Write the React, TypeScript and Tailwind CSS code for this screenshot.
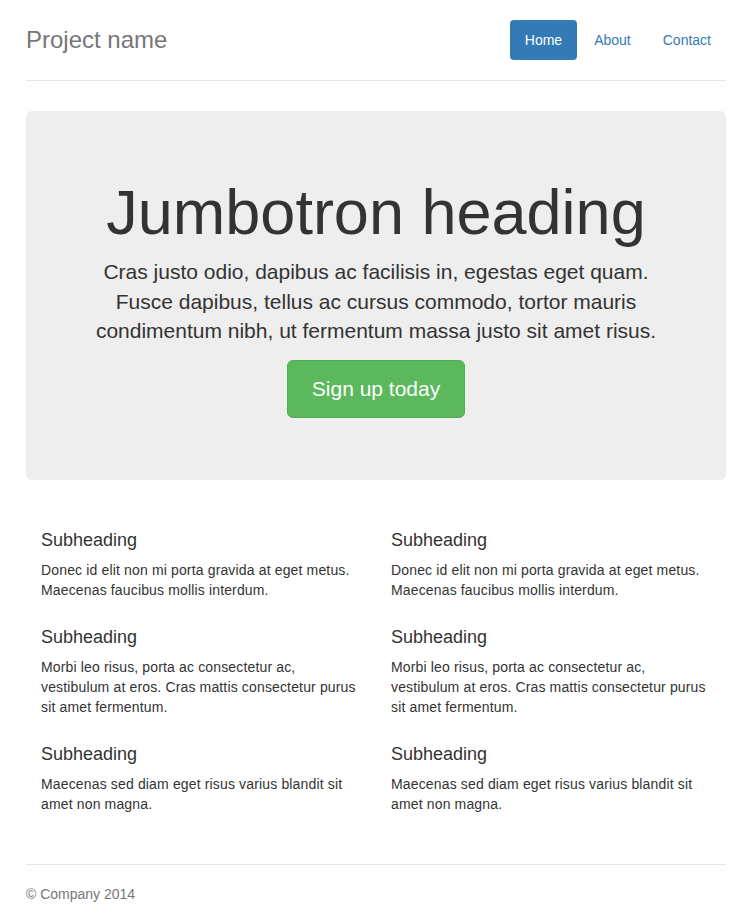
import React from "react";

const navItems = [
  { label: "Home", active: true },
  { label: "About", active: false },
  { label: "Contact", active: false },
];

const columns = [
  [
    "Donec id elit non mi porta gravida at eget metus. Maecenas faucibus mollis interdum.",
    "Morbi leo risus, porta ac consectetur ac, vestibulum at eros. Cras mattis consectetur purus sit amet fermentum.",
    "Maecenas sed diam eget risus varius blandit sit amet non magna.",
  ],
  [
    "Donec id elit non mi porta gravida at eget metus. Maecenas faucibus mollis interdum.",
    "Morbi leo risus, porta ac consectetur ac, vestibulum at eros. Cras mattis consectetur purus sit amet fermentum.",
    "Maecenas sed diam eget risus varius blandit sit amet non magna.",
  ],
];

const App: React.FC = () => {
  return (
    <div className="min-h-screen bg-white font-['Liberation_Sans',Arial,sans-serif] text-[14px] leading-[20px] text-[#333]">
      <div className="mx-auto max-w-[730px] px-[15px]">
        {/* header */}
        <div className="mb-[30px] flex items-start justify-between border-b border-[#e5e5e5] pt-[20px] pb-[20px]">
          <h3 className="text-[24px] leading-[40px] text-[#777]">Project name</h3>
          <nav className="flex gap-[2px]">
            {navItems.map(({ label, active }) => (
              <a
                key={label}
                href="#"
                className={
                  active
                    ? "rounded-[4px] bg-[#337ab7] px-[15px] py-[10px] text-white"
                    : "rounded-[4px] px-[15px] py-[10px] text-[#337ab7]"
                }
              >
                {label}
              </a>
            ))}
          </nav>
        </div>

        {/* jumbotron */}
        <div className="flex flex-col items-center rounded-[6px] bg-[#eee] px-[60px] pt-[67px] pb-[62px] text-center">
          <h1 className="text-[63px] leading-[1.1]">Jumbotron heading</h1>
          <p className="mt-[10px] mb-[15px] text-[21px] leading-[1.4]">
            Cras justo odio, dapibus ac facilisis in, egestas eget quam. Fusce
            dapibus, tellus ac cursus commodo, tortor mauris condimentum nibh,
            ut fermentum massa justo sit amet risus.
          </p>
          <a
            href="#"
            className="flex h-[58px] items-center rounded-[6px] border border-[#4cae4c] bg-[#5cb85c] px-[24px] text-[21px] text-white"
          >
            Sign up today
          </a>
        </div>

        {/* marketing */}
        <div className="mt-[40px] mb-[50px] grid grid-cols-2 tracking-[0.15px]">
          {columns.map((items, c) => (
            <div key={c} className="px-[15px]">
              {items.map((text, i) => (
                <div key={`${c}_${i}`} className={i === 0 ? "pt-[10px]" : "pt-[27px]"}>
                  <h4 className="mb-[10px] text-[18px] leading-[20px] tracking-normal">Subheading</h4>
                  <p>{text}</p>
                </div>
              ))}
            </div>
          ))}
        </div>

        {/* footer */}
        <footer className="border-t border-[#e5e5e5] pt-[19px] pb-[20px] text-[#777]">
          <p>© Company 2014</p>
        </footer>
      </div>
    </div>
  );
};

export default App;
